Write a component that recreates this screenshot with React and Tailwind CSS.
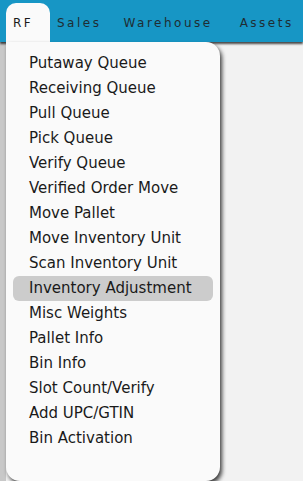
import React from "react";

const items = [
	"Putaway Queue",
	"Receiving Queue",
	"Pull Queue",
	"Pick Queue",
	"Verify Queue",
	"Verified Order Move",
	"Move Pallet",
	"Move Inventory Unit",
	"Scan Inventory Unit",
	"Inventory Adjustment",
	"Misc Weights",
	"Pallet Info",
	"Bin Info",
	"Slot Count/Verify",
	"Add UPC/GTIN",
	"Bin Activation",
];

const App = () => {
	return (
		<div className="w-[303px] h-[481px] bg-[#f2f2f2] overflow-hidden font-['DejaVu_Sans',sans-serif] text-[#1a1a1a]">
			<nav className="h-[42px] bg-[#1796c5] flex items-end pl-[6px] shadow-[0_2px_2px_rgba(0,0,0,0.7)] relative z-10">
				<div className="h-[39px] w-[44px] bg-[#fafafa] rounded-t-[10px] flex items-center pl-[7px] text-[12px] tracking-[2.5px]">RF</div>
				<div className="h-[39px] flex items-center pl-[7px] text-[12px] tracking-[2.5px] text-[#1f2d33]">Sales</div>
				<div className="h-[39px] flex items-center pl-[22px] text-[12px] tracking-[2.5px] text-[#1f2d33]">Warehouse</div>
				<div className="h-[39px] flex items-center pl-[27px] text-[12px] tracking-[2.5px] text-[#1f2d33]">Assets</div>
			</nav>
			<div className="flex">
				<div className="w-[6px] h-[439px] bg-[#c8c8c8]"></div>
				<ul className="relative z-20 w-[214px] bg-[#fafafa] rounded-b-[14px] rounded-tr-[14px] pt-[9px] pb-[9px] px-[7px] shadow-[2px_3px_4px_rgba(0,0,0,0.75)]">
					{items.map((item) => (
						<li
							key={item}
							className={`h-[25px] flex items-center pl-[16px] text-[15px] rounded-[6px] ${item === "Inventory Adjustment" ? "bg-[#cccccc]" : ""}`}
						>
							{item}
						</li>
					))}
				</ul>
			</div>
		</div>
	);
};

export default App;
